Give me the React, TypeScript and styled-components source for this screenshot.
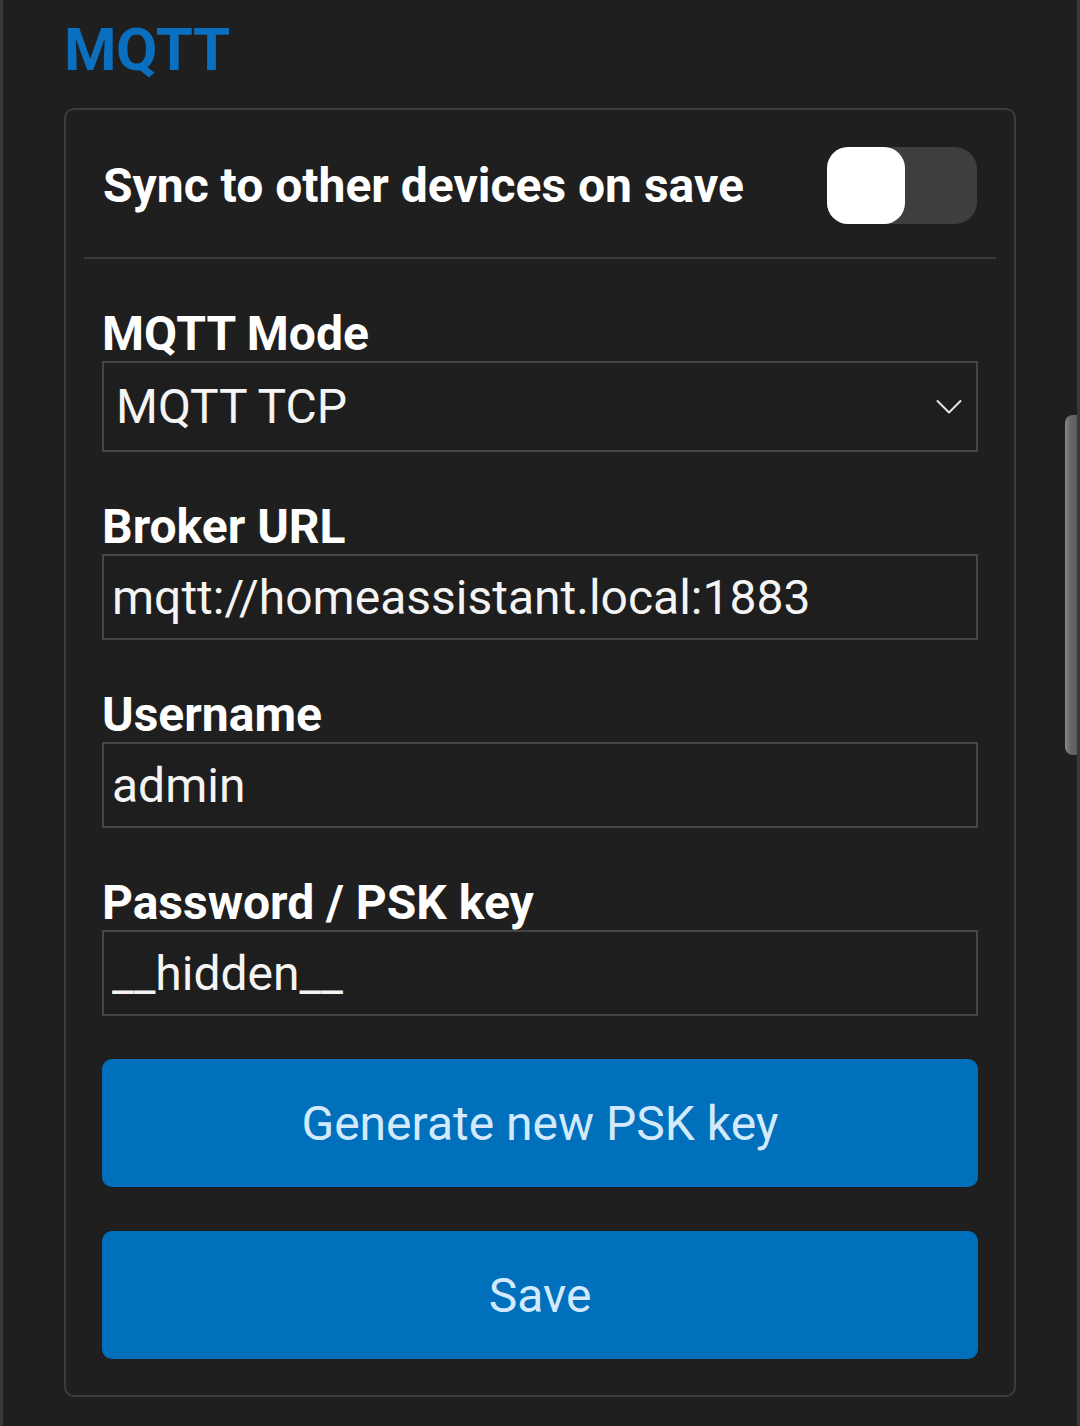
import React, { useState } from 'react'
import styled, { createGlobalStyle } from 'styled-components'

const GlobalStyle = createGlobalStyle`
  html, body {
    margin: 0;
    padding: 0;
    background: #1f1f1f;
  }
  body {
    font-family: Roboto, "Liberation Sans", Arial, sans-serif;
    color: #ffffff;
  }
  * {
    box-sizing: border-box;
  }
`

const Page = styled.div`
  position: relative;
  min-height: 1426px;
  padding: 20px 0 0 61px;
  border-left: 3px solid #383838;
  border-right: 3px solid #383838;
  overflow: hidden;
`

const Title = styled.h1`
  margin: 0 0 28px 0;
  font-size: 60px;
  line-height: 60px;
  font-weight: 700;
  color: #0b6fc0;
  letter-spacing: -0.5px;
`

const Card = styled.div`
  width: 952px;
  border: 2px solid #3c3c3c;
  border-radius: 10px;
  padding: 0 18px 36px;
`

const SyncRow = styled.div`
  display: flex;
  align-items: center;
  justify-content: space-between;
  padding: 37px 19px 33px 19px;
`

const SyncLabel = styled.span`
  font-size: 48px;
  line-height: 56px;
  font-weight: 700;
`

const Track = styled.button<{ $on: boolean }>`
  display: flex;
  justify-content: ${(p) => (p.$on ? 'flex-end' : 'flex-start')};
  width: 150px;
  height: 77px;
  padding: 0;
  border: none;
  border-radius: 22px;
  background: ${(p) => (p.$on ? '#0b6fc0' : '#3e3e3e')};
  cursor: pointer;
`

const Thumb = styled.span`
  width: 78px;
  height: 77px;
  border-radius: 21px;
  background: #ffffff;
`

const Divider = styled.hr`
  margin: 0;
  border: none;
  height: 2px;
  background: #3a3a3a;
`

const Form = styled.div`
  display: flex;
  flex-direction: column;
  padding: 47px 18px 0;
`

const Field = styled.div`
  display: flex;
  flex-direction: column;
  margin-bottom: 47px;

  &:last-of-type {
    margin-bottom: 43px;
  }
`

const Label = styled.label`
  font-size: 48px;
  line-height: 55px;
  font-weight: 700;
`

const SelectBox = styled.div`
  display: flex;
  align-items: center;
  justify-content: space-between;
  height: 91px;
  padding: 0 14px 0 12px;
  border: 2px solid #454545;
  background: #1e1e1e;
  font-size: 48px;
  color: #f4f4f4;
`

const TextInput = styled.input`
  height: 86px;
  padding: 0 8px;
  border: 2px solid #454545;
  border-radius: 0;
  background: #1e1e1e;
  font-family: Roboto, "Liberation Sans", Arial, sans-serif;
  font-size: 48px;
  color: #f4f4f4;
  outline: none;
`

const Button = styled.button<{ $gap?: boolean }>`
  height: 128px;
  margin-bottom: ${(p) => (p.$gap ? '44px' : '0')};
  border: none;
  border-radius: 10px;
  background: #0070bd;
  font-family: Roboto, "Liberation Sans", Arial, sans-serif;
  font-size: 48px;
  color: #d3eafc;
  cursor: pointer;
`

const Scrollbar = styled.div`
  position: absolute;
  top: 415px;
  right: 0;
  width: 12px;
  height: 340px;
  border-radius: 8px 0 0 8px;
  background: linear-gradient(90deg, #8a8a8a 0%, #6a6a6a 40%, #5c5c5c 100%);
`

const Chevron = () => (
  <svg width="26" height="16" viewBox="0 0 26 16" fill="none">
    <polyline points="1.5,2 13,13.5 24.5,2" stroke="#e6e6e6" strokeWidth="2" strokeLinecap="round" strokeLinejoin="round" />
  </svg>
)

const App: React.FC = () => {
  const [sync, setSync] = useState(false)

  return (
    <>
      <GlobalStyle />
      <Page>
        <Title>MQTT</Title>
        <Card>
          <SyncRow>
            <SyncLabel>Sync to other devices on save</SyncLabel>
            <Track $on={sync} onClick={() => setSync(!sync)} aria-pressed={sync}>
              <Thumb />
            </Track>
          </SyncRow>
          <Divider />
          <Form>
            <Field>
              <Label>MQTT Mode</Label>
              <SelectBox>
                <span>MQTT TCP</span>
                <Chevron />
              </SelectBox>
            </Field>
            <Field>
              <Label>Broker URL</Label>
              <TextInput readOnly defaultValue="mqtt://homeassistant.local:1883" />
            </Field>
            <Field>
              <Label>Username</Label>
              <TextInput readOnly defaultValue="admin" />
            </Field>
            <Field>
              <Label>Password / PSK key</Label>
              <TextInput readOnly defaultValue="__hidden__" />
            </Field>
            <Button $gap>Generate new PSK key</Button>
            <Button>Save</Button>
          </Form>
        </Card>
        <Scrollbar />
      </Page>
    </>
  )
}

export default App
